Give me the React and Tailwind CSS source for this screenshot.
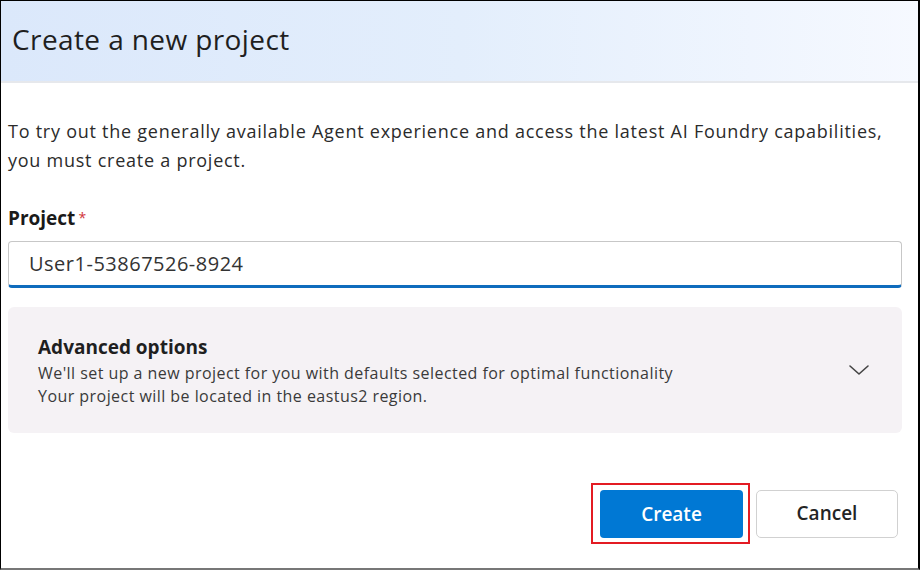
import React from 'react';

const ChevronDown = () => (
  <svg width="22" height="14" viewBox="0 0 22 14" fill="none">
    <path d="M2 3 L11 11 L20 3" stroke="#444" strokeWidth="1.6" strokeLinecap="round" strokeLinejoin="round" />
  </svg>
);

const App = () => {
  return (
    <div
      className="w-[920px] h-[570px] bg-white border-l border-t border-r-2 border-b-2 border-black border-b-[#777] flex flex-col text-[#242424] overflow-hidden"
      style={{ fontFamily: '"Open Sans", "Noto Sans", sans-serif' }}
    >
      {/* Header */}
      <div className="h-[82px] shrink-0 flex items-center px-[11px] bg-gradient-to-r from-[#dbe8fb] via-[#e3eefc] to-[#f6f9ff] border-b-2 border-[#e6e8ec]">
        <h1 className="text-[28px] text-[#1f1f1f] tracking-[0.4px] pb-1">Create a new project</h1>
      </div>

      <div className="flex flex-col pl-[7px] pr-[16px] pt-[34px]">
        <p className="text-[18px] leading-[29px] text-[#2b2b2b] tracking-[0.75px]">
          To try out the generally available Agent experience and access the latest AI Foundry capabilities,
          <br />
          you must create a project.
        </p>

        {/* Project field */}
        <label className="mt-[31px] text-[19px] font-bold text-[#1a1a1a] leading-[24px]">
          Project<span className="text-[#d13438] text-[14px] font-normal align-top ml-[3px]">*</span>
        </label>
        <div className="mt-[11px] h-[47px] rounded-[4px] border border-[#c7c7c7] border-b-[3px] border-b-[#0f6cbd] flex items-center px-[20px]">
          <span className="text-[20px] text-[#333] tracking-[0.5px]">User1-53867526-8924</span>
        </div>

        {/* Advanced options */}
        <div className="mt-[19px] h-[126px] rounded-[6px] bg-[#f5f2f5] flex items-center pl-[30px] pr-[32px]">
          <div className="flex-1 flex flex-col pt-[2px]">
            <span className="text-[19px] font-bold text-[#1f1f1f] leading-[24px]">Advanced options</span>
            <span className="mt-[3px] text-[16px] leading-[23px] text-[#3a3a3a] tracking-[0.45px]">
              We'll set up a new project for you with defaults selected for optimal functionality
            </span>
            <span className="text-[16px] leading-[23px] text-[#3a3a3a] tracking-[0.45px]">
              Your project will be located in the eastus2 region.
            </span>
          </div>
          <ChevronDown />
        </div>
      </div>

      {/* Footer buttons */}
      <div className="mt-auto mb-[24px] flex justify-end items-center gap-[6px] pr-[20px]">
        <div className="border-2 border-[#e31b23] pl-[7px] pr-[5px] pt-[5px] pb-[4px]">
          <button className="block w-[143px] h-[48px] rounded-[4px] bg-[#0078d4] text-white text-[19px] font-semibold">
            Create
          </button>
        </div>
        <button className="w-[142px] h-[48px] rounded-[5px] bg-white border border-[#d1d1d1] text-[#242424] text-[19px] font-semibold">
          Cancel
        </button>
      </div>
    </div>
  );
};

export default App;
